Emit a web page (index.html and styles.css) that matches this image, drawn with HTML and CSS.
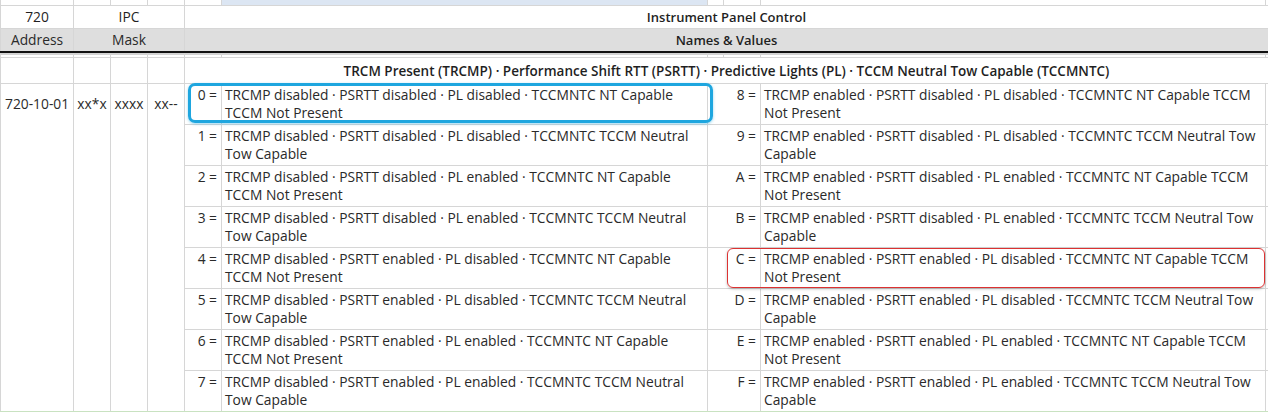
FILE: index.html
```html
<!DOCTYPE html>
<html lang="en">
<head>
<meta charset="utf-8">
<title>Instrument Panel Control</title>
<link rel="stylesheet" href="styles.css">
</head>
<body>
<div class="sheet">
  <table class="grid">
    <colgroup>
      <col class="c-a"><col class="c-s"><col class="c-s"><col class="c-s"><col class="c-s">
      <col class="c-f"><col class="c-g"><col class="c-s"><col class="c-i"><col class="c-j">
    </colgroup>
    <tr class="r-top">
      <td></td><td></td><td></td><td></td><td></td><td class="sel"></td><td></td><td></td><td></td><td></td>
    </tr>
    <tr class="r-title">
      <td class="ctr semi">720</td>
      <td colspan="3" class="ctr semi">IPC</td>
      <td colspan="6" class="ctr strong">Instrument Panel Control</td>
    </tr>
    <tr class="r-head">
      <td class="ctr mid">Address</td>
      <td colspan="3" class="ctr mid">Mask</td>
      <td colspan="6" class="ctr strong">Names &amp; Values</td>
    </tr>
    <tr class="r-gap">
      <td></td><td></td><td></td><td></td><td></td><td></td><td></td><td></td><td></td><td></td>
    </tr>
    <tr class="r-fields">
      <td></td><td></td><td></td><td></td>
      <td colspan="6" class="ctr fields">TRCM Present (TRCMP) · Performance Shift RTT (PSRTT) · Predictive Lights (PL) · TCCM Neutral Tow Capable (TCCMNTC)</td>
    </tr>
    <tr class="r-data">
      <td rowspan="8" class="key">720-10-01</td>
      <td rowspan="8" class="key ctr">xx*x</td>
      <td rowspan="8" class="key ctr">xxxx</td>
      <td rowspan="8" class="key ctr">xx--</td>
      <td class="num">0 =</td>
      <td class="val">TRCMP disabled · PSRTT disabled · PL disabled · TCCMNTC NT Capable TCCM Not Present</td>
      <td colspan="2" class="num">8 =</td>
      <td class="val">TRCMP enabled · PSRTT disabled · PL disabled · TCCMNTC NT Capable TCCM Not Present</td>
      <td></td>
    </tr>
    <tr class="r-data">
      <td class="num">1 =</td>
      <td class="val">TRCMP disabled · PSRTT disabled · PL disabled · TCCMNTC TCCM Neutral Tow Capable</td>
      <td colspan="2" class="num">9 =</td>
      <td class="val">TRCMP enabled · PSRTT disabled · PL disabled · TCCMNTC TCCM Neutral Tow Capable</td>
      <td></td>
    </tr>
    <tr class="r-data">
      <td class="num">2 =</td>
      <td class="val">TRCMP disabled · PSRTT disabled · PL enabled · TCCMNTC NT Capable TCCM Not Present</td>
      <td colspan="2" class="num">A =</td>
      <td class="val">TRCMP enabled · PSRTT disabled · PL enabled · TCCMNTC NT Capable TCCM Not Present</td>
      <td></td>
    </tr>
    <tr class="r-data">
      <td class="num">3 =</td>
      <td class="val">TRCMP disabled · PSRTT disabled · PL enabled · TCCMNTC TCCM Neutral Tow Capable</td>
      <td colspan="2" class="num">B =</td>
      <td class="val">TRCMP enabled · PSRTT disabled · PL enabled · TCCMNTC TCCM Neutral Tow Capable</td>
      <td></td>
    </tr>
    <tr class="r-data">
      <td class="num">4 =</td>
      <td class="val">TRCMP disabled · PSRTT enabled · PL disabled · TCCMNTC NT Capable TCCM Not Present</td>
      <td colspan="2" class="num">C =</td>
      <td class="val">TRCMP enabled · PSRTT enabled · PL disabled · TCCMNTC NT Capable TCCM Not Present</td>
      <td></td>
    </tr>
    <tr class="r-data">
      <td class="num">5 =</td>
      <td class="val">TRCMP disabled · PSRTT enabled · PL disabled · TCCMNTC TCCM Neutral Tow Capable</td>
      <td colspan="2" class="num">D =</td>
      <td class="val">TRCMP enabled · PSRTT enabled · PL disabled · TCCMNTC TCCM Neutral Tow Capable</td>
      <td></td>
    </tr>
    <tr class="r-data">
      <td class="num">6 =</td>
      <td class="val">TRCMP disabled · PSRTT enabled · PL enabled · TCCMNTC NT Capable TCCM Not Present</td>
      <td colspan="2" class="num">E =</td>
      <td class="val">TRCMP enabled · PSRTT enabled · PL enabled · TCCMNTC NT Capable TCCM Not Present</td>
      <td></td>
    </tr>
    <tr class="r-data r-last">
      <td class="num">7 =</td>
      <td class="val">TRCMP disabled · PSRTT enabled · PL enabled · TCCMNTC TCCM Neutral Tow Capable</td>
      <td colspan="2" class="num">F =</td>
      <td class="val">TRCMP enabled · PSRTT enabled · PL enabled · TCCMNTC TCCM Neutral Tow Capable</td>
      <td></td>
    </tr>
  </table>
  <div class="mark mark-blue"></div>
  <div class="mark mark-red"></div>
</div>
</body>
</html>
```

FILE: styles.css
```css
html, body {
  margin: 0;
  padding: 0;
  background: #ffffff;
}

.sheet {
  position: relative;
  width: 1268px;
  height: 414px;
  overflow: hidden;
  font-family: "Open Sans", "Noto Sans", sans-serif;
  font-size: 13.8px;
  color: #2a2a2a;
}

.grid {
  border-collapse: collapse;
  table-layout: fixed;
  width: 1268px;
}

.c-a { width: 73px; }
.c-s { width: 37px; }
.c-f { width: 486px; }
.c-g { width: 16px; }
.c-i { width: 505px; }
.c-j { width: 3px; }

.grid td {
  border: 1px solid #d6d6d6;
  padding: 0 4px;
  white-space: normal;
  overflow: hidden;
  line-height: 18px;
}

.ctr { text-align: center; }
.semi { font-weight: 500; font-size: 13.8px; color: #1f1f1f; }
.mid { font-weight: 500; }
.strong { font-weight: 600; font-size: 13px; color: #1f1f1f; }
.fields { font-weight: 600; font-size: 13.5px; color: #1f1f1f; }

.r-top td {
  height: 5px;
  padding: 0;
  border-top: none;
}
.r-top .sel { background: #dce6f3; }

.r-title td {
  height: 22px;
  padding: 0;
}

.r-head td {
  height: 22px;
  padding: 0;
  background: #dedede;
  border-bottom: 2px solid #111111;
}

.r-gap td {
  height: 4px;
  padding: 0;
  background: linear-gradient(#d3d3d3 0 2px, #ffffff 2px);
}

.r-fields td {
  height: 25px;
  padding: 0;
}

.r-data td {
  height: 38px;
  vertical-align: top;
  padding-top: 2px;
  padding-bottom: 0;
}
.r-data td.key {
  padding: 11px 0 0;
  border-bottom-color: #c9e2c1;
}
.r-data td.key:first-child {
  padding-left: 4px;
  text-align: left;
}
.num {
  text-align: right;
  white-space: nowrap;
  padding-right: 4px;
}
.r-data td.val {
  text-align: left;
  padding-left: 3px;
  padding-right: 3px;
}

.r-last td {
  border-bottom-color: #c9e2c1;
}

.mark {
  position: absolute;
  box-sizing: border-box;
  pointer-events: none;
}
.mark-blue {
  left: 188px;
  top: 83px;
  width: 525px;
  height: 40px;
  border: 3px solid #1ea6df;
  border-radius: 7px;
  box-shadow: 0 1px 3px rgba(30, 166, 223, 0.45);
}
.mark-red {
  left: 727px;
  top: 248px;
  width: 538px;
  height: 40px;
  border: 1.5px solid #dc3232;
  border-radius: 6px;
  box-shadow: 0 1px 3px rgba(0, 0, 0, 0.25);
}
```
